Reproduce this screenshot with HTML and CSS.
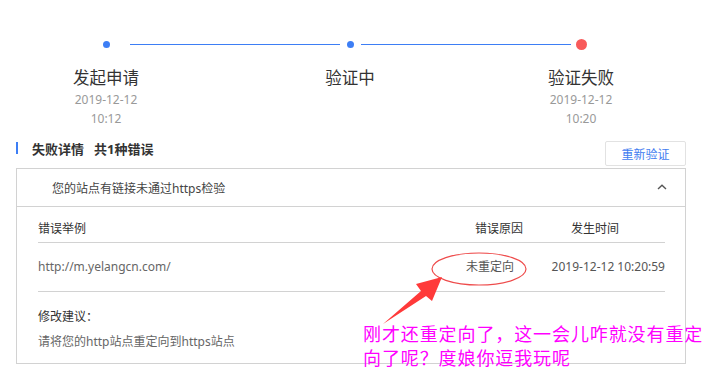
FILE: index.html
```html
<!DOCTYPE html>
<html lang="zh-CN">
<head>
	<meta charset="UTF-8">
	<title>https认证</title>
	<link rel="stylesheet" href="styles.css">
</head>
<body>
	<div class="page">
		<div class="track">
			<span class="dot dot1"></span>
			<span class="bar bar1"></span>
			<span class="dot dot2"></span>
			<span class="bar bar2"></span>
			<span class="dot dot-fail"></span>
		</div>
		<div class="labels">
			<div class="step step1">
				<div class="step-name">发起申请</div>
				<div class="step-time">2019-12-12</div>
				<div class="step-time">10:12</div>
			</div>
			<div class="step step2">
				<div class="step-name">验证中</div>
			</div>
			<div class="step step3">
				<div class="step-name">验证失败</div>
				<div class="step-time">2019-12-12</div>
				<div class="step-time">10:20</div>
			</div>
		</div>

		<div class="sec-head">
			<div class="sec-title"><i class="mark"></i><b class="t1">失败详情</b><b class="t2">共1种错误</b></div>
			<button class="btn-retry">重新验证</button>
		</div>

		<div class="box">
			<div class="box-head">
				<span>您的站点有链接未通过https检验</span>
				<svg class="caret" width="10" height="6" viewBox="0 0 10 6"><path d="M1 5 L5 1.3 L9 5" fill="none" stroke="#555" stroke-width="1.4"/></svg>
			</div>
			<div class="box-body">
				<div class="row row-head">
					<div class="c-url">错误举例</div>
					<div class="c-reason">错误原因</div>
					<div class="c-time">发生时间</div>
				</div>
				<div class="row row-data">
					<div class="c-url">http://m.yelangcn.com/</div>
					<div class="c-reason">未重定向</div>
					<div class="c-time">2019-12-12 10:20:59</div>
				</div>
				<div class="advice">
					<div class="advice-title">修改建议：</div>
					<div class="advice-text">请将您的http站点重定向到https站点</div>
				</div>
			</div>
		</div>
	</div>

	<svg class="marks" width="719" height="382" viewBox="0 0 719 382">
		<ellipse cx="479" cy="269" rx="47" ry="16" fill="none" stroke="#ee4b4b" stroke-width="1.2"/>
		<polygon points="383,324 421,291 416,284 442,277 432,301 426,296" fill="#ff3a3a"/>
	</svg>
	<div class="note">刚才还重定向了，这一会儿咋就没有重定向了呢？度娘你逗我玩呢</div>
</body>
</html>
```

FILE: styles.css
```css
*{
	box-sizing: border-box;
}
body{
	margin: 0;
	background: #fff;
	font-family: "Noto Sans", "Noto Sans CJK SC", sans-serif;
	color: #333;
}
.page{
	width: 719px;
	padding-top: 39px;
}
.track{
	display: flex;
	align-items: center;
	height: 11px;
	padding-left: 103px;
}
.dot{
	display: block;
	width: 7px;
	height: 7px;
	border-radius: 50%;
	background: #3d7ef5;
}
.dot2{
	margin-left: 7px;
}
.dot-fail{
	width: 11px;
	height: 11px;
	margin-left: 5px;
	background: #f85a5a;
}
.bar{
	display: block;
	width: 210px;
	height: 1.5px;
	background: #3d7ef5;
}
.bar1{
	margin-left: 20px;
}
.bar2{
	margin-left: 7px;
}
.labels{
	display: flex;
	margin-top: 17px;
}
.step{
	width: 120px;
	text-align: center;
}
.step1{
	margin-left: 46px;
}
.step2{
	margin-left: 124px;
}
.step3{
	margin-left: 111px;
}
.step-name{
	font-size: 16.5px;
	line-height: 22px;
	color: #333;
	margin-bottom: 1px;
}
.step-time{
	font-size: 12px;
	line-height: 19px;
	color: #999;
}
.sec-head{
	display: flex;
	justify-content: space-between;
	align-items: flex-start;
	margin: 13px 33px 0 16px;
}
.sec-title{
	display: flex;
	align-items: center;
	height: 14px;
}
.mark{
	display: block;
	width: 2px;
	height: 12px;
	background: #3d7ef5;
	margin-right: 14px;
}
.t1{
	font-size: 13px;
	margin-right: 10px;
}
.t2{
	font-size: 13px;
}
.btn-retry{
	width: 81px;
	height: 25px;
	padding: 0;
	border: 1px solid #e2e2e2;
	border-radius: 2px;
	background: #fff;
	color: #3f7cf0;
	font-family: inherit;
	font-size: 12px;
}
.box{
	margin: 2px 33px 0 16px;
	border: 1px solid #d2d2d2;
}
.box-head{
	display: flex;
	justify-content: space-between;
	align-items: center;
	height: 38px;
	padding: 0 18px 0 35px;
	border-bottom: 1px solid #d2d2d2;
	font-size: 12px;
	color: #444;
}
.caret{
	display: block;
	margin-bottom: 2px;
}
.box-body{
	padding: 0 20px 0 21px;
}
.row{
	display: flex;
	border-bottom: 1px solid #d2d2d2;
	font-size: 12px;
	white-space: nowrap;
}
.row-head{
	padding: 12px 0 3px;
	line-height: 20px;
	color: #333;
}
.row-data{
	line-height: 48px;
	color: #555;
}
.c-url{
	flex: 1;
}
.c-reason{
	text-align: right;
}
.row-head .c-reason{
	padding-right: 22px;
}
.row-data .c-reason{
	padding-right: 31px;
}
.c-time{
	width: 120px;
	text-align: right;
}
.row-head .c-time{
	text-align: left;
	padding-left: 26px;
}
.row-data .c-url{
	color: #666;
}
.advice{
	padding: 12px 0 9px;
	font-size: 12px;
	line-height: 25px;
}
.advice-title{
	color: #333;
}
.advice-text{
	color: #666;
}
.marks{
	position: absolute;
	left: 0;
	top: 0;
}
.note{
	position: absolute;
	left: 363px;
	top: 321px;
	width: 350px;
	font-family: "Noto Sans CJK SC", sans-serif;
	font-size: 18px;
	line-height: 24px;
	letter-spacing: 0.9px;
	color: #f0f;
}
```
